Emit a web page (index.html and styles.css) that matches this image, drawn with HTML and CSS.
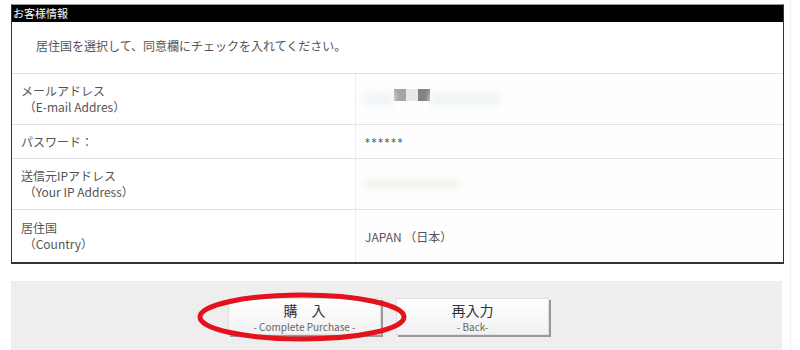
FILE: index.html
```html
<!DOCTYPE html>
<html lang="ja">
<head>
<meta charset="utf-8">
<link rel="stylesheet" href="styles.css">
</head>
<body>
<div class="page">
  <div class="box">
    <div class="head">お客様情報</div>
    <div class="intro">居住国を選択して、同意欄にチェックを入れてください。</div>
    <div class="row r-email">
      <div class="lbl">メールアドレス<br>&nbsp;（E-mail Addres）</div>
      <div class="val"><span class="blur b1"></span><span class="sq g1"></span><span class="sq g2"></span><span class="sq g3"></span><span class="blur b2"></span></div>
    </div>
    <div class="row r-pass">
      <div class="lbl">パスワード：</div>
      <div class="val stars">******</div>
    </div>
    <div class="row r-ip">
      <div class="lbl">送信元IPアドレス<br>&nbsp;（Your IP Address）</div>
      <div class="val"><span class="blur b3"></span></div>
    </div>
    <div class="row r-country">
      <div class="lbl">居住国<br>&nbsp;（Country）</div>
      <div class="val">JAPAN （日本）</div>
    </div>
  </div>
  <div class="actions">
    <div class="btn buy"><span class="t">購　入</span><span class="s">- Complete Purchase -</span></div>
    <div class="btn back"><span class="t">再入力</span><span class="s">- Back-</span></div>
    <svg class="circle" width="212" height="52" viewBox="0 0 212 52"><ellipse cx="106" cy="26" rx="102" ry="22" fill="none" stroke="#e3121c" stroke-width="5"/></svg>
  </div>
</div>
</body>
</html>
```
FILE: styles.css
```css
html, body { margin: 0; padding: 0; background: #fff; }
body { font-family: "Noto Sans CJK JP", "Noto Sans", sans-serif; font-size: 12px; color: #555; }
.page { position: relative; width: 800px; height: 350px; overflow: hidden; padding-top: 4px; box-sizing: border-box; }
.page::after { content: ""; position: absolute; left: 790px; top: 0; width: 1px; height: 350px; background: #f0f0f0; }
.box { margin-left: 11px; width: 773px; box-sizing: border-box; border: 1px solid #333; border-top: 1px solid #999; border-bottom: 2px solid #333; }
.head { height: 17px; background: #000; color: #fff; font-size: 11px; line-height: 16px; padding-left: 1px; }
.intro { height: 51px; line-height: 47px; padding-left: 24px; border-bottom: 1px solid #e2e2e2; font-size: 12px; }
.row { display: flex; border-bottom: 1px solid #e2e2e2; }
.row:last-child { border-bottom: none; }
.lbl { width: 344px; flex: none; padding-left: 9px; box-sizing: border-box; display: flex; flex-direction: column; justify-content: center; line-height: 16px; border-right: 1px solid #eee; }
.val { flex: 1; display: flex; align-items: center; padding-left: 9px; background: #fefefe; }
.r-email { height: 50px; }
.r-pass { height: 33px; }
.r-ip { height: 50px; }
.r-country { height: 52px; }
.stars { font-family: "DejaVu Sans", sans-serif; font-size: 10px; color: #444; letter-spacing: 1.5px; padding-top: 2px; box-sizing: border-box; }
.r-email .val { padding-left: 8px; }
.blur { display: inline-block; height: 14px; filter: blur(3px); }
.b1 { width: 30px; background: #f2f5f8; }
.b2 { width: 70px; background: #f1f6f2; margin-left: 0; }
.b3 { width: 95px; height: 10px; background: #f3f4ec; }
.sq { display: inline-block; width: 12px; height: 12px; margin-top: -8px; }
.g1 { background: #a4a4a6; }
.g2 { background: #e6e8ea; }
.g3 { background: #7f8381; }
.actions { position: relative; margin: 17px 0 0 11px; width: 771px; height: 80px; background: #eeeeee; display: flex; gap: 15px; padding: 17px 0 0 217px; box-sizing: border-box; }
.btn { width: 153px; height: 37px; box-sizing: border-box; background: linear-gradient(#ffffff, #f1f1f1); border: 1px solid #e0e0e0; box-shadow: 2px 2px 0 #9a9a9a; display: flex; flex-direction: column; align-items: center; justify-content: center; }
.btn .t { font-size: 14px; color: #333; line-height: 20px; font-weight: 400; }
.btn .s { font-size: 10px; color: #666; line-height: 14px; }
.circle { position: absolute; left: 185px; top: 10px; }
```
